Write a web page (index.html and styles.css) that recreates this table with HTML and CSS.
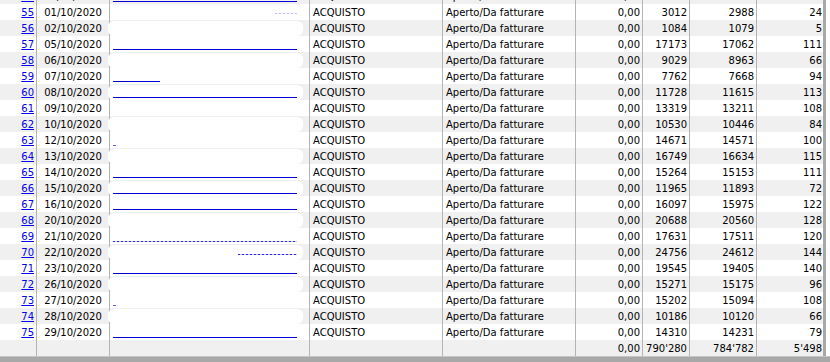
FILE: index.html
```html
<!DOCTYPE html>
<html lang="it">
<head>
<meta charset="utf-8">
<title>Ordini</title>
<link rel="stylesheet" href="styles.css">
</head>
<body>
<div class="window">
  <div class="table">
    <div class="viewport">
      <div class="rows">
        <div class="row alt"><div class="c n"><a href="#">54</a></div><div class="c d">30/09/2020</div><div class="c x"><span class="u full"></span></div><div class="c t">ACQUISTO</div><div class="c t">Aperto/Da fatturare</div><div class="c r">0,00</div><div class="c r">12044</div><div class="c r">11950</div><div class="c r last">94</div></div>
        <div class="row"><div class="c n"><a href="#">55</a></div><div class="c d">01/10/2020</div><div class="c x"><span class="u dots right faint"></span></div><div class="c t">ACQUISTO</div><div class="c t">Aperto/Da fatturare</div><div class="c r">0,00</div><div class="c r">3012</div><div class="c r">2988</div><div class="c r last">24</div></div>
        <div class="row alt"><div class="c n"><a href="#">56</a></div><div class="c d">02/10/2020</div><div class="c x"><span class="mask"></span></div><div class="c t">ACQUISTO</div><div class="c t">Aperto/Da fatturare</div><div class="c r">0,00</div><div class="c r">1084</div><div class="c r">1079</div><div class="c r last">5</div></div>
        <div class="row"><div class="c n"><a href="#">57</a></div><div class="c d">05/10/2020</div><div class="c x"><span class="u full"></span></div><div class="c t">ACQUISTO</div><div class="c t">Aperto/Da fatturare</div><div class="c r">0,00</div><div class="c r">17173</div><div class="c r">17062</div><div class="c r last">111</div></div>
        <div class="row alt"><div class="c n"><a href="#">58</a></div><div class="c d">06/10/2020</div><div class="c x"><span class="mask"></span></div><div class="c t">ACQUISTO</div><div class="c t">Aperto/Da fatturare</div><div class="c r">0,00</div><div class="c r">9029</div><div class="c r">8963</div><div class="c r last">66</div></div>
        <div class="row"><div class="c n"><a href="#">59</a></div><div class="c d">07/10/2020</div><div class="c x"><span class="u short"></span></div><div class="c t">ACQUISTO</div><div class="c t">Aperto/Da fatturare</div><div class="c r">0,00</div><div class="c r">7762</div><div class="c r">7668</div><div class="c r last">94</div></div>
        <div class="row alt"><div class="c n"><a href="#">60</a></div><div class="c d">08/10/2020</div><div class="c x"><span class="mask"><span class="u full"></span></span></div><div class="c t">ACQUISTO</div><div class="c t">Aperto/Da fatturare</div><div class="c r">0,00</div><div class="c r">11728</div><div class="c r">11615</div><div class="c r last">113</div></div>
        <div class="row"><div class="c n"><a href="#">61</a></div><div class="c d">09/10/2020</div><div class="c x"></div><div class="c t">ACQUISTO</div><div class="c t">Aperto/Da fatturare</div><div class="c r">0,00</div><div class="c r">13319</div><div class="c r">13211</div><div class="c r last">108</div></div>
        <div class="row alt"><div class="c n"><a href="#">62</a></div><div class="c d">10/10/2020</div><div class="c x"><span class="mask"></span></div><div class="c t">ACQUISTO</div><div class="c t">Aperto/Da fatturare</div><div class="c r">0,00</div><div class="c r">10530</div><div class="c r">10446</div><div class="c r last">84</div></div>
        <div class="row"><div class="c n"><a href="#">63</a></div><div class="c d">12/10/2020</div><div class="c x"><span class="u tick"></span></div><div class="c t">ACQUISTO</div><div class="c t">Aperto/Da fatturare</div><div class="c r">0,00</div><div class="c r">14671</div><div class="c r">14571</div><div class="c r last">100</div></div>
        <div class="row alt"><div class="c n"><a href="#">64</a></div><div class="c d">13/10/2020</div><div class="c x"><span class="mask"></span></div><div class="c t">ACQUISTO</div><div class="c t">Aperto/Da fatturare</div><div class="c r">0,00</div><div class="c r">16749</div><div class="c r">16634</div><div class="c r last">115</div></div>
        <div class="row"><div class="c n"><a href="#">65</a></div><div class="c d">14/10/2020</div><div class="c x"><span class="u full"></span></div><div class="c t">ACQUISTO</div><div class="c t">Aperto/Da fatturare</div><div class="c r">0,00</div><div class="c r">15264</div><div class="c r">15153</div><div class="c r last">111</div></div>
        <div class="row alt"><div class="c n"><a href="#">66</a></div><div class="c d">15/10/2020</div><div class="c x"><span class="mask"><span class="u full"></span></span></div><div class="c t">ACQUISTO</div><div class="c t">Aperto/Da fatturare</div><div class="c r">0,00</div><div class="c r">11965</div><div class="c r">11893</div><div class="c r last">72</div></div>
        <div class="row"><div class="c n"><a href="#">67</a></div><div class="c d">16/10/2020</div><div class="c x"><span class="u full"></span></div><div class="c t">ACQUISTO</div><div class="c t">Aperto/Da fatturare</div><div class="c r">0,00</div><div class="c r">16097</div><div class="c r">15975</div><div class="c r last">122</div></div>
        <div class="row alt"><div class="c n"><a href="#">68</a></div><div class="c d">20/10/2020</div><div class="c x"><span class="mask"></span></div><div class="c t">ACQUISTO</div><div class="c t">Aperto/Da fatturare</div><div class="c r">0,00</div><div class="c r">20688</div><div class="c r">20560</div><div class="c r last">128</div></div>
        <div class="row"><div class="c n"><a href="#">69</a></div><div class="c d">21/10/2020</div><div class="c x"><span class="u dots"></span></div><div class="c t">ACQUISTO</div><div class="c t">Aperto/Da fatturare</div><div class="c r">0,00</div><div class="c r">17631</div><div class="c r">17511</div><div class="c r last">120</div></div>
        <div class="row alt"><div class="c n"><a href="#">70</a></div><div class="c d">22/10/2020</div><div class="c x"><span class="mask"><span class="u dots right high"></span></span></div><div class="c t">ACQUISTO</div><div class="c t">Aperto/Da fatturare</div><div class="c r">0,00</div><div class="c r">24756</div><div class="c r">24612</div><div class="c r last">144</div></div>
        <div class="row"><div class="c n"><a href="#">71</a></div><div class="c d">23/10/2020</div><div class="c x"><span class="u full"></span></div><div class="c t">ACQUISTO</div><div class="c t">Aperto/Da fatturare</div><div class="c r">0,00</div><div class="c r">19545</div><div class="c r">19405</div><div class="c r last">140</div></div>
        <div class="row alt"><div class="c n"><a href="#">72</a></div><div class="c d">26/10/2020</div><div class="c x"><span class="mask"></span></div><div class="c t">ACQUISTO</div><div class="c t">Aperto/Da fatturare</div><div class="c r">0,00</div><div class="c r">15271</div><div class="c r">15175</div><div class="c r last">96</div></div>
        <div class="row"><div class="c n"><a href="#">73</a></div><div class="c d">27/10/2020</div><div class="c x"><span class="u tick"></span></div><div class="c t">ACQUISTO</div><div class="c t">Aperto/Da fatturare</div><div class="c r">0,00</div><div class="c r">15202</div><div class="c r">15094</div><div class="c r last">108</div></div>
        <div class="row alt"><div class="c n"><a href="#">74</a></div><div class="c d">28/10/2020</div><div class="c x"><span class="mask"></span></div><div class="c t">ACQUISTO</div><div class="c t">Aperto/Da fatturare</div><div class="c r">0,00</div><div class="c r">10186</div><div class="c r">10120</div><div class="c r last">66</div></div>
        <div class="row"><div class="c n"><a href="#">75</a></div><div class="c d">29/10/2020</div><div class="c x"><span class="u full"></span></div><div class="c t">ACQUISTO</div><div class="c t">Aperto/Da fatturare</div><div class="c r">0,00</div><div class="c r">14310</div><div class="c r">14231</div><div class="c r last">79</div></div>
      </div>
    </div>
    <div class="row alt total"><div class="c n"></div><div class="c d"></div><div class="c x"></div><div class="c t"></div><div class="c t"></div><div class="c r">0,00</div><div class="c r">790'280</div><div class="c r">784'782</div><div class="c r last">5'498</div></div>
  </div>
  <div class="vbar"></div>
</div>
<div class="hbar"></div>
</body>
</html>
```

FILE: styles.css
```css
html, body {
  margin: 0;
  padding: 0;
  background: #ffffff;
}

body {
  width: 830px;
  height: 362px;
  overflow: hidden;
  font-family: "DejaVu Sans", Verdana, sans-serif;
  font-size: 10px;
  color: #000000;
}

.window {
  display: flex;
  height: 356px;
}

.table {
  width: 823px;
  display: flex;
  flex-direction: column;
}

.viewport {
  height: 340px;
  overflow: hidden;
}

.rows {
  margin-top: -12px;
}

.row {
  display: grid;
  grid-template-columns: 37px 73px 200px 133px 133px 67px 47px 67px 67px;
  height: 16px;
  background: #ffffff;
}

.row.alt {
  background: #f0f0f0;
}

.c {
  box-sizing: border-box;
  height: 16px;
  border-right: 1px solid #b4b4b4;
  padding-top: 1px;
  line-height: 15px;
  white-space: nowrap;
  overflow: hidden;
}

.c.last {
  border-right: none;
}

.n {
  text-align: right;
  padding-right: 2px;
}

.n a {
  color: #0000ee;
  text-decoration: underline;
}

.d {
  text-align: center;
}

.t {
  padding-left: 3px;
}

.r {
  text-align: right;
  padding-right: 2px;
}

.x {
  padding: 0;
  display: flex;
  flex-direction: column;
  justify-content: flex-end;
  overflow: visible;
}

.mask {
  display: flex;
  flex-direction: column;
  justify-content: flex-end;
  height: 15px;
  margin: 1px 6px 0 -2px;
  background: #ffffff;
  border-radius: 6px;
}

.u {
  display: block;
  height: 1px;
  margin: 0 12px 2px 3px;
  background: #0000d8;
}

.mask .u {
  margin-left: 5px;
  margin-right: 6px;
}

.u.short {
  width: 47px;
}

.u.dots {
  background: repeating-linear-gradient(90deg, #2a2ae0 0 2px, #c8c8f6 2px 4px);
}

.u.right {
  margin-left: 130px;
  margin-bottom: 6px;
}

.u.high {
  margin-bottom: 5px;
}

.u.faint {
  opacity: 0.3;
  margin-left: 165px;
}

.u.tick {
  width: 3px;
  opacity: 0.6;
}

.total .c {
  background: #f0f0f0;
}

.vbar {
  width: 3px;
  background: #a8a8a8;
}

.hbar {
  height: 6px;
  background: #a8a8a8;
  border-top: 1px solid #c4c4c4;
  box-sizing: border-box;
}
```
